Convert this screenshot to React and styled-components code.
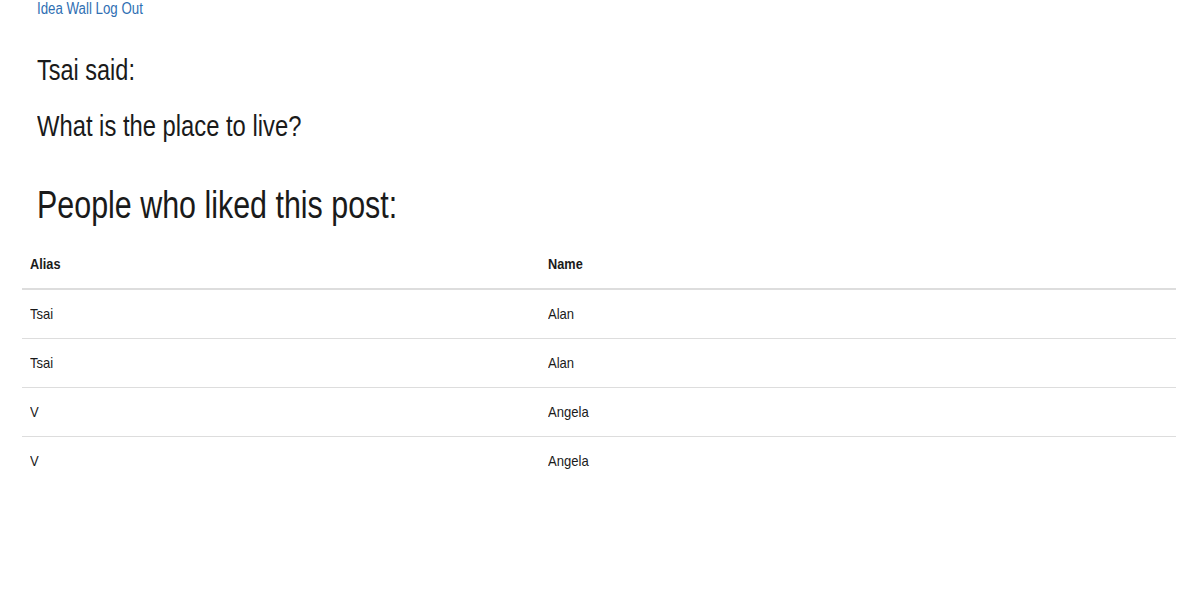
import React from 'react';
import styled, { createGlobalStyle } from 'styled-components';

const GlobalStyle = createGlobalStyle`
  html, body {
    margin: 0;
    padding: 0;
    background: #fff;
    color: #1a1a1a;
    font-family: "Liberation Sans", Arial, sans-serif;
  }
`;

// no condensed face installed, so squeeze the glyphs sideways
const Narrow = styled.span`
  display: inline-block;
  white-space: nowrap;
  transform: scaleX(${p => p.$x || 0.82});
  transform-origin: left center;
`;

const Page = styled.div`
  padding: 0 24px 0 22px;
`;

const Nav = styled.nav`
  padding-left: 15px;
  font-size: 16px;
  line-height: 18px;
`;

const NavLink = styled.a`
  color: #2f6fb3;
  text-decoration: none;
  cursor: pointer;
`;

const Post = styled.section`
  padding-left: 15px;
`;

const Heading = styled.h3`
  margin: 0;
  padding-top: ${p => p.$gap}px;
  font-size: 29px;
  line-height: 1.1;
  font-weight: 400;
`;

const Title = styled.h1`
  margin: 0;
  padding-top: 41px;
  font-size: 39px;
  line-height: 1.1;
  font-weight: 400;
`;

const Table = styled.table`
  width: 100%;
  margin-top: 13px;
  border-collapse: collapse;
  font-size: 15px;
`;

const HeadCell = styled.th`
  text-align: left;
  font-weight: 700;
  padding: 12px 8px;
  line-height: 24px;
  border-bottom: 2px solid #ddd;
  width: ${p => p.$width || 'auto'};
`;

const Row = styled.tr`
  & + & td {
    border-top: 1px solid #ddd;
  }
`;

const Cell = styled.td`
  padding: 12px 8px;
  line-height: 24px;
`;

const likes = [
  { alias: 'Tsai', name: 'Alan' },
  { alias: 'Tsai', name: 'Alan' },
  { alias: 'V', name: 'Angela' },
  { alias: 'V', name: 'Angela' },
];

export default function App() {
  return (
    <Page>
      <GlobalStyle />
      <Nav>
        <Narrow $x={0.83}>
          <NavLink>Idea Wall</NavLink> <NavLink>Log Out</NavLink>
        </Narrow>
      </Nav>
      <Post>
        <Heading $gap={37}>
          <Narrow $x={0.81}>Tsai said:</Narrow>
        </Heading>
        <Heading $gap={24}>
          <Narrow $x={0.82}>What is the place to live?</Narrow>
        </Heading>
        <Title>
          <Narrow $x={0.78}>People who liked this post:</Narrow>
        </Title>
      </Post>
      <Table>
        <thead>
          <tr>
            <HeadCell $width="502px"><Narrow $x={0.85}>Alias</Narrow></HeadCell>
            <HeadCell><Narrow $x={0.85}>Name</Narrow></HeadCell>
          </tr>
        </thead>
        <tbody>
          {likes.map((l, i) => (
            <Row key={i}>
              <Cell><Narrow $x={0.87}>{l.alias}</Narrow></Cell>
              <Cell><Narrow $x={0.87}>{l.name}</Narrow></Cell>
            </Row>
          ))}
        </tbody>
      </Table>
    </Page>
  );
}
